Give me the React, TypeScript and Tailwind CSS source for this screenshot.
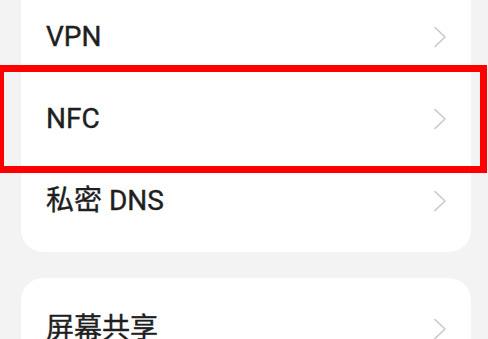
import React from 'react';

const Chevron: React.FC = () => (
    <svg width="14" height="22" viewBox="0 0 14 22" fill="none" className="shrink-0">
        <path d="M2 1.5 L12 11 L2 20.5" stroke="#c9c9c9" strokeWidth="1.6" strokeLinecap="round" strokeLinejoin="round" />
    </svg>
);

const Row: React.FC<{ label: string }> = ({ label }) => (
    <div className="h-[82px] flex items-center justify-between pl-[25px] pr-[24px]">
        <span className="text-[28px] font-normal text-[#1f1f1f] leading-none [-webkit-text-stroke:0.4px_#1f1f1f]">{label}</span>
        <Chevron />
    </div>
);

export default function App() {
    return (
        <div
            className="relative w-[488px] h-[339px] overflow-hidden bg-[#f3f3f3]"
            style={{ fontFamily: 'Roboto, "Noto Sans CJK SC", sans-serif' }}
        >
            <div className="flex flex-col gap-[26px] pl-[21px] -mt-[4px]">
                <div className="bg-white rounded-b-[22px] pb-[10px] w-[450px]">
                    <Row label="VPN" />
                    <Row label="NFC" />
                    <Row label="私密 DNS" />
                </div>
                <div className="bg-white rounded-[22px] pt-[10px] w-[450px]">
                    <Row label="屏幕共享" />
                </div>
            </div>

            {/* highlight box */}
            <div className="absolute left-[-3px] top-[65px] w-[490px] h-[108px] border-[7px] border-[#ff0000]" />
        </div>
    );
}
